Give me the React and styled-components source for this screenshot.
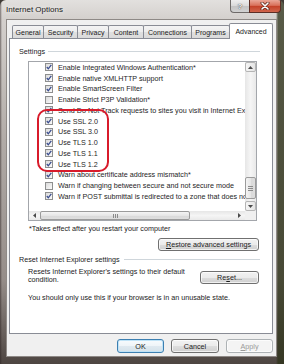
import React from "react";
import styled, { createGlobalStyle } from "styled-components";

const GlobalStyle = createGlobalStyle`
  html, body {
    margin: 0;
    padding: 0;
    background: #3f3a36;
  }
  body {
    font-family: "Liberation Sans", Arial, sans-serif;
    color: #1b1b1b;
  }
`;

// window frame
const Window = styled.div`
  width: 284px;
  height: 364px;
  box-sizing: border-box;
  display: flex;
  flex-direction: column;
  padding: 0 7px 7px 6px;
  border-radius: 6px 6px 0 0;
  overflow: hidden;
  background:
    linear-gradient(90deg, rgba(40, 30, 30, 0.55) 0, rgba(0, 0, 0, 0) 2px, rgba(0, 0, 0, 0) 276px, rgba(45, 50, 25, 0.75) 278px),
    linear-gradient(180deg, #e2e0de 0, #d4d0cd 19px, #b1aba7 140px, #958d89 280px, #4d4541 364px);
`;

const TitleBar = styled.div`
  height: 19px;
  flex: none;
  display: flex;
  justify-content: space-between;
  align-items: flex-start;
`;

const Title = styled.span`
  margin-top: 5px;
  font-size: 8px;
  line-height: 10px;
  color: #1b1b1b;
  text-shadow: 0 0 4px rgba(255, 255, 255, 0.9);
`;

const CaptionButtons = styled.div`
  display: flex;
  margin-right: -4px;
`;

const HelpButton = styled.div`
  width: 19px;
  height: 13px;
  box-sizing: border-box;
  border: 1px solid #6f6b69;
  border-top: none;
  border-right: none;
  border-radius: 0 0 0 4px;
  background: linear-gradient(180deg, #eeeeee 0%, #d9d9d9 50%, #c4c4c4 51%, #d2d2d2 100%);
  display: flex;
  align-items: center;
  justify-content: center;
  font-size: 8px;
  font-weight: bold;
  color: #f4f4f4;
  text-shadow: 0 0 1px #555, 0 0 1px #555;
`;

const CloseButton = styled.div`
  width: 32px;
  height: 13px;
  box-sizing: border-box;
  border: 1px solid #5d2e25;
  border-top: none;
  border-radius: 0 0 4px 0;
  background: linear-gradient(180deg, #eaa798 0%, #d9715b 45%, #c44128 52%, #d0654c 100%);
  display: flex;
  align-items: center;
  justify-content: center;
`;

const Client = styled.div`
  flex: 1;
  display: flex;
  flex-direction: column;
  background: #f0f0f0;
  border: 1px solid #8e8986;
`;

// tabs
const TabStrip = styled.div`
  height: 18px;
  flex: none;
  display: flex;
  align-items: flex-end;
  padding-left: 5px;
  position: relative;
  z-index: 1;
`;

const Tab = styled.div`
  width: ${(p) => p.$w}px;
  height: ${(p) => (p.$active ? 16 : 13)}px;
  margin-left: -1px;
  margin-bottom: ${(p) => (p.$active ? -1 : 0)}px;
  box-sizing: border-box;
  border: 1px solid #898c95;
  border-bottom: none;
  border-radius: 2px 2px 0 0;
  background: ${(p) =>
    p.$active ? "#ffffff" : "linear-gradient(180deg, #f4f4f4 0%, #ececec 50%, #e0e0e0 51%, #dadada 100%)"};
  display: flex;
  align-items: center;
  justify-content: center;
  padding-top: ${(p) => (p.$active ? 0 : 1)}px;
  font-size: 7px;
  color: #1b1b1b;
  white-space: nowrap;
  &:first-child {
    margin-left: 0;
  }
`;

const Panel = styled.div`
  height: 296px;
  flex: none;
  margin: 0 3px 0 2px;
  box-sizing: border-box;
  border: 1px solid #898c95;
  background: #ffffff;
  display: flex;
  flex-direction: column;
  font-size: 7.2px;
`;

const GroupHeader = styled.div`
  height: 10px;
  margin-top: ${(p) => p.$top}px;
  padding: 0 12px 0 9px;
  display: flex;
  align-items: center;
  gap: ${(p) => p.$gap}px;
  white-space: nowrap;
`;

const GroupLine = styled.div`
  flex: 1;
  height: 1px;
  background: #cfd6db;
  box-shadow: 0 1px 0 #ffffff;
`;

// list box
const ListBox = styled.div`
  position: relative;
  margin: 5px 0 0 18px;
  width: 229px;
  height: 160px;
  flex: none;
  box-sizing: border-box;
  border: 1px solid #a3a6ab;
  display: grid;
  grid-template-columns: 1fr 11px;
  grid-template-rows: 1fr 9px;
`;

const Items = styled.div`
  overflow: hidden;
`;

const Row = styled.div`
  height: 10.75px;
  display: flex;
  align-items: center;
  gap: 5px;
  padding-left: 16px;
  white-space: nowrap;
  color: #1e1e1e;
`;

const Box = styled.span`
  width: 8px;
  height: 8px;
  flex: none;
  box-sizing: border-box;
  border: 1px solid #8e8f8f;
  background: linear-gradient(135deg, #dadada, #fbfbfb);
  display: flex;
  align-items: center;
  justify-content: center;
`;

const VScroll = styled.div`
  grid-column: 2;
  grid-row: 1;
  display: flex;
  flex-direction: column;
  background: linear-gradient(90deg, #e6e6e6, #f5f5f5 50%, #e9e9e9);
`;

const HScroll = styled.div`
  grid-column: 1;
  grid-row: 2;
  display: flex;
  background: linear-gradient(180deg, #e6e6e6, #f5f5f5 50%, #e9e9e9);
`;

const Corner = styled.div`
  grid-column: 2;
  grid-row: 2;
  background: #f0f0f0;
`;

const ScrollButton = styled.div`
  flex: none;
  width: ${(p) => (p.$horizontal ? 11 : 11)}px;
  height: ${(p) => (p.$horizontal ? 9 : 10)}px;
  box-sizing: border-box;
  border: 1px solid ${(p) => (p.$framed ? "#b5b5b5" : "transparent")};
  border-radius: 2px;
  background: ${(p) => (p.$framed ? "linear-gradient(90deg, #f6f6f6, #e4e4e4)" : "transparent")};
  display: flex;
  align-items: center;
  justify-content: center;
`;

const Thumb = styled.div`
  flex: none;
  width: ${(p) => (p.$horizontal ? "150px" : "auto")};
  height: ${(p) => (p.$horizontal ? "auto" : "22px")};
  box-sizing: border-box;
  border: 1px solid #9b9b9b;
  border-radius: 2px;
  background: ${(p) =>
    p.$horizontal
      ? "linear-gradient(180deg, #f4f4f4, #e6e6e6 50%, #d9d9d9 51%, #dedede)"
      : "linear-gradient(90deg, #f4f4f4, #e6e6e6 50%, #d9d9d9 51%, #dedede)"};
  display: flex;
  flex-direction: ${(p) => (p.$horizontal ? "row" : "column")};
  align-items: center;
  justify-content: center;
  gap: 1px;
`;

const Grip = styled.span`
  display: block;
  width: ${(p) => (p.$horizontal ? "1px" : "5px")};
  height: ${(p) => (p.$horizontal ? "4px" : "1px")};
  background: #8a8a8a;
`;

const Track = styled.div`
  flex: ${(p) => (p.$size ? `0 0 ${p.$size}px` : 1)};
`;

const Highlight = styled.div`
  position: absolute;
  left: 8px;
  top: 47px;
  width: 72px;
  height: 63px;
  box-sizing: border-box;
  border: 2.6px solid #d81b2b;
  border-radius: 10px;
  pointer-events: none;
`;

const Note = styled.div`
  margin: ${(p) => p.$top}px 0 0 ${(p) => p.$left}px;
  line-height: 9px;
  white-space: nowrap;
`;

const PushButton = styled.div`
  width: ${(p) => p.$w}px;
  height: ${(p) => p.$h || 13}px;
  flex: none;
  box-sizing: border-box;
  border: 1px solid ${(p) => (p.$disabled ? "#adb2b5" : p.$default ? "#3c7fb1" : "#707070")};
  border-radius: 3px;
  background: ${(p) =>
    p.$disabled
      ? "#f4f4f4"
      : p.$default
      ? "linear-gradient(180deg, #f7fbfd 0%, #eef4f8 50%, #dfe9f0 51%, #d5e2ea 100%)"
      : "linear-gradient(180deg, #f2f2f2 0%, #ebebeb 50%, #dddddd 51%, #cfcfcf 100%)"};
  box-shadow: inset 0 0 0 1px ${(p) => (p.$default ? "#bfe3f7" : "rgba(255,255,255,0.7)")};
  display: flex;
  align-items: center;
  justify-content: center;
  font-size: 7.2px;
  color: ${(p) => (p.$disabled ? "#9a9a9a" : "#1b1b1b")};
  white-space: nowrap;
`;

const RestoreButton = styled(PushButton)`
  align-self: flex-end;
  margin: 5.5px 13px 0 0;
`;

const ResetRow = styled.div`
  margin-top: 4px;
  padding: 0 13px 0 18px;
  display: flex;
  align-items: flex-start;
`;

const Description = styled.div`
  width: 172px;
  line-height: 8px;
`;

const ResetButton = styled(PushButton)`
  margin: 3px 0 0 auto;
`;

const DialogButtons = styled.div`
  margin-top: 5px;
  padding-right: 3px;
  display: flex;
  justify-content: flex-end;
  gap: 7px;
`;

const tabs = [
  { label: "General", w: 32 },
  { label: "Security", w: 35 },
  { label: "Privacy", w: 32 },
  { label: "Content", w: 36 },
  { label: "Connections", w: 49 },
  { label: "Programs", w: 39 },
  { label: "Advanced", w: 44, active: true },
];

const settings = [
  { text: "Enable Integrated Windows Authentication*", on: true },
  { text: "Enable native XMLHTTP support", on: true },
  { text: "Enable SmartScreen Filter", on: true },
  { text: "Enable Strict P3P Validation*", on: false },
  { text: "Send Do Not Track requests to sites you visit in Internet Explorer*", on: true },
  { text: "Use SSL 2.0", on: true },
  { text: "Use SSL 3.0", on: true },
  { text: "Use TLS 1.0", on: true },
  { text: "Use TLS 1.1", on: true },
  { text: "Use TLS 1.2", on: true },
  { text: "Warn about certificate address mismatch*", on: true },
  { text: "Warn if changing between secure and not secure mode", on: false },
  { text: "Warn if POST submittal is redirected to a zone that does not permit posts", on: true },
];

function Check() {
  return (
    <svg width="6" height="6" viewBox="0 0 6 6">
      <polyline points="0.8,3 2.3,4.8 5.3,0.8" fill="none" stroke="#3a4d8f" strokeWidth="1.3" />
    </svg>
  );
}

function Arrow({ dir }) {
  const pts = {
    up: "0,3 2.5,0 5,3",
    down: "0,0 2.5,3 5,0",
    left: "3,0 0,2.5 3,5",
    right: "0,0 3,2.5 0,5",
  }[dir];
  const vertical = dir === "up" || dir === "down";
  return (
    <svg width={vertical ? 5 : 3} height={vertical ? 3 : 5} viewBox={vertical ? "0 0 5 3" : "0 0 3 5"}>
      <polygon points={pts} fill="#4a4a4a" />
    </svg>
  );
}

function App() {
  return (
    <>
      <GlobalStyle />
      <Window>
        <TitleBar>
          <Title>Internet Options</Title>
          <CaptionButtons>
            <HelpButton>?</HelpButton>
            <CloseButton>
              <svg width="10" height="8" viewBox="0 0 10 8">
                <path d="M2 1 L8 7 M8 1 L2 7" stroke="#5a2418" strokeWidth="3" strokeLinecap="round" />
                <path d="M2 1 L8 7 M8 1 L2 7" stroke="#ffffff" strokeWidth="1.6" strokeLinecap="round" />
              </svg>
            </CloseButton>
          </CaptionButtons>
        </TitleBar>
        <Client>
          <TabStrip>
            {tabs.map((t) => (
              <Tab key={t.label} $w={t.w} $active={t.active}>
                {t.label}
              </Tab>
            ))}
          </TabStrip>
          <Panel>
            <GroupHeader $top={7} $gap={3}>
              Settings
              <GroupLine />
            </GroupHeader>
            <ListBox>
              <Items>
                {settings.map((s) => (
                  <Row key={s.text}>
                    <Box>{s.on && <Check />}</Box>
                    {s.text}
                  </Row>
                ))}
              </Items>
              <VScroll>
                <ScrollButton $framed>
                  <Arrow dir="up" />
                </ScrollButton>
                <Track />
                <Thumb>
                  <Grip />
                  <Grip />
                  <Grip />
                </Thumb>
                <Track $size={2} />
                <ScrollButton $framed>
                  <Arrow dir="down" />
                </ScrollButton>
              </VScroll>
              <HScroll>
                <ScrollButton $horizontal>
                  <Arrow dir="left" />
                </ScrollButton>
                <Thumb $horizontal>
                  <Grip $horizontal />
                  <Grip $horizontal />
                  <Grip $horizontal />
                </Thumb>
                <Track />
                <ScrollButton $horizontal>
                  <Arrow dir="right" />
                </ScrollButton>
              </HScroll>
              <Corner />
              <Highlight />
            </ListBox>
            <Note $top={2.5} $left={19}>
              *Takes effect after you restart your computer
            </Note>
            <RestoreButton $w={101}>
              <u>R</u>estore advanced settings
            </RestoreButton>
            <GroupHeader $top={3} $gap={4}>
              Reset Internet Explorer settings
              <GroupLine />
            </GroupHeader>
            <ResetRow>
              <Description>Resets Internet Explorer's settings to their default condition.</Description>
              <ResetButton $w={59}>
                Re<u>s</u>et...
              </ResetButton>
            </ResetRow>
            <Note $top={8.5} $left={18}>
              You should only use this if your browser is in an unusable state.
            </Note>
          </Panel>
          <DialogButtons>
            <PushButton $w={47} $h={14} $default>
              OK
            </PushButton>
            <PushButton $w={48} $h={14}>
              Cancel
            </PushButton>
            <PushButton $w={47} $h={14} $disabled>
              <u>A</u>pply
            </PushButton>
          </DialogButtons>
        </Client>
      </Window>
    </>
  );
}

export default App;
